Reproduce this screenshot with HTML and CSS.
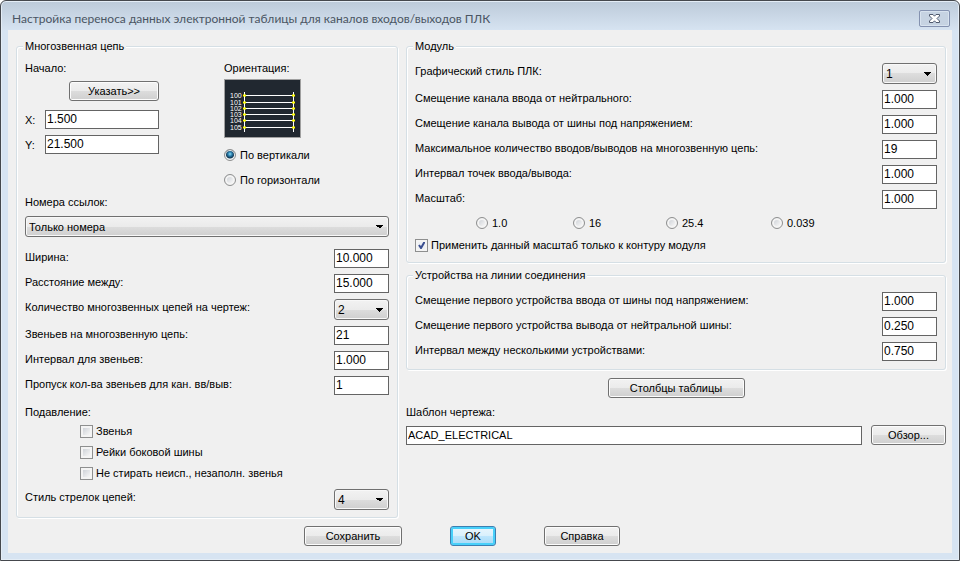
FILE: index.html
```html
<!DOCTYPE html>
<html lang="ru">
<head>
  <meta charset="UTF-8">
  <title>Настройка переноса данных</title>
  <link rel="stylesheet" href="styles.css">
</head>
<body>
  <div class="window">
    <header class="titlebar">
      <h1 class="title">Настройка переноса данных электронной таблицы для каналов входов/выходов ПЛК</h1>
      <button class="close" type="button" aria-label="Закрыть">
        <svg width="13" height="11" viewBox="0 0 13 11">
          <path d="M1.500 1.500h3.500l1.500 1.700 1.500-1.700h3.500v1.500l-2.500 2.500 2.500 2.500v1.500h-3.500l-1.500-1.700-1.500 1.700h-3.500v-1.500l2.500-2.500-2.500-2.500z" fill="#fff" stroke="#505a6e"/>
        </svg>
      </button>
    </header>

    <form class="dialog">
      <div class="columns">
        <fieldset class="group ladder">
          <legend>Многозвенная цепь</legend>

          <div class="top">
            <div class="origin">
              <span>Начало:</span>
              <button class="btn pick" type="button">Указать&gt;&gt;</button>
              <div class="coord">
                <label for="x">X:</label>
                <input class="text" id="x" type="text" value="1.500">
              </div>
              <div class="coord">
                <label for="y">Y:</label>
                <input class="text" id="y" type="text" value="21.500">
              </div>
            </div>

            <div class="orientation">
              <span>Ориентация:</span>
              <svg class="preview" width="77" height="59" viewBox="0 0 77 59">
                <rect x="0.5" y="0.5" width="76" height="58" fill="#212830" stroke="#a0a0a0"/>
                <path d="M20.500 13v40M69.500 13v40M20 16.500h50M20 23.500h50M20 29.500h50M20 35.500h50M20 41.500h50M20 48.500h50" stroke="#fff" fill="none"/>
                <path d="M19 16.500h3M19 23.500h3M19 29.500h3M19 35.500h3M19 41.500h3M19 48.500h3M68 16.500h3M68 23.500h3M68 29.500h3M68 35.500h3M68 41.500h3M68 48.500h3" stroke="#ff0" stroke-width="2" fill="none"/>
                <g class="rungs">
                  <text x="6" y="19">100</text>
                  <text x="6" y="26">101</text>
                  <text x="6" y="32">102</text>
                  <text x="6" y="38">103</text>
                  <text x="6" y="44">104</text>
                  <text x="6" y="51">105</text>
                </g>
              </svg>
              <label class="check"><input type="radio" name="orient" checked>По вертикали</label>
              <label class="check"><input type="radio" name="orient">По горизонтали</label>
            </div>
          </div>

          <label class="refs-label" for="refs">Номера ссылок:</label>
          <select class="select wide" id="refs"><option>Только номера</option></select>

          <div class="rows">
            <div class="row"><label for="width">Ширина:</label><input class="text" id="width" type="text" value="10.000"></div>
            <div class="row"><label for="spacing">Расстояние между:</label><input class="text" id="spacing" type="text" value="15.000"></div>
            <div class="row"><label for="count">Количество многозвенных цепей на чертеж:</label><select class="select" id="count"><option>2</option></select></div>
            <div class="row"><label for="rungs">Звеньев на многозвенную цепь:</label><input class="text" id="rungs" type="text" value="21"></div>
            <div class="row"><label for="step">Интервал для звеньев:</label><input class="text" id="step" type="text" value="1.000"></div>
            <div class="row"><label for="skip">Пропуск кол-ва звеньев для кан. вв/выв:</label><input class="text" id="skip" type="text" value="1"></div>
          </div>

          <div class="suppress">
            <span>Подавление:</span>
            <div class="suppress-list">
              <label class="check"><input type="checkbox">Звенья</label>
              <label class="check"><input type="checkbox">Рейки боковой шины</label>
              <label class="check"><input type="checkbox">Не стирать неисп., незаполн. звенья</label>
            </div>
          </div>

          <div class="row"><label for="arrows">Стиль стрелок цепей:</label><select class="select" id="arrows"><option>4</option></select></div>
        </fieldset>

        <div class="right">
          <fieldset class="group">
            <legend>Модуль</legend>
            <div class="rows">
              <div class="row"><label for="style">Графический стиль ПЛК:</label><select class="select" id="style"><option>1</option></select></div>
              <div class="row"><label for="in-offset">Смещение канала ввода от нейтрального:</label><input class="text" id="in-offset" type="text" value="1.000"></div>
              <div class="row"><label for="out-offset">Смещение канала вывода от шины под напряжением:</label><input class="text" id="out-offset" type="text" value="1.000"></div>
              <div class="row"><label for="max-io">Максимальное количество вводов/выводов на многозвенную цепь:</label><input class="text" id="max-io" type="text" value="19"></div>
              <div class="row"><label for="io-step">Интервал точек ввода/вывода:</label><input class="text" id="io-step" type="text" value="1.000"></div>
              <div class="row"><label for="scale">Масштаб:</label><input class="text" id="scale" type="text" value="1.000"></div>
            </div>
            <div class="scales">
              <label class="check"><input type="radio" name="scale">1.0</label>
              <label class="check"><input type="radio" name="scale">16</label>
              <label class="check"><input type="radio" name="scale">25.4</label>
              <label class="check"><input type="radio" name="scale">0.039</label>
            </div>
            <label class="check"><input type="checkbox" checked>Применить данный масштаб только к контуру модуля</label>
          </fieldset>

          <fieldset class="group devices">
            <legend>Устройства на линии соединения</legend>
            <div class="rows">
              <div class="row"><label for="first-in">Смещение первого устройства ввода от шины под напряжением:</label><input class="text" id="first-in" type="text" value="1.000"></div>
              <div class="row"><label for="first-out">Смещение первого устройства вывода от нейтральной шины:</label><input class="text" id="first-out" type="text" value="0.250"></div>
              <div class="row"><label for="dev-step">Интервал между несколькими устройствами:</label><input class="text" id="dev-step" type="text" value="0.750"></div>
            </div>
          </fieldset>

          <button class="btn table-columns" type="button">Столбцы таблицы</button>

          <label for="template">Шаблон чертежа:</label>
          <div class="template">
            <input class="text" id="template" type="text" value="ACAD_ELECTRICAL">
            <button class="btn browse" type="button">Обзор...</button>
          </div>
        </div>
      </div>

      <footer class="actions">
        <button class="btn save" type="button">Сохранить</button>
        <button class="btn ok" type="button">OK</button>
        <button class="btn help" type="button">Справка</button>
      </footer>
    </form>
  </div>
</body>
</html>
```

FILE: styles.css
```css
* {
  box-sizing: border-box;
}

body {
  margin: 0;
  background: #fff;
  color: #000;
  font-family: "Liberation Sans", Arial, sans-serif;
  font-size: 11px;
  line-height: 14px;
}

button,
input,
select {
  margin: 0;
  font: inherit;
  color: inherit;
}

/* Window frame */
.window {
  min-height: 100vh;
  display: flex;
  flex-direction: column;
  padding: 0 7px 7px;
  border: 1px solid #45484d;
  border-radius: 6px 6px 0 0;
  background: linear-gradient(#bccad9, #d7e4f2 30px);
  box-shadow: inset 0 0 0 1px #e4edf6;
}

.titlebar {
  display: flex;
  align-items: center;
  justify-content: space-between;
  height: 29px;
  padding: 6px 2px 0 4px;
}

.title {
  margin: 0;
  font-family: Lato, "Noto Sans", sans-serif;
  font-size: 12px;
  font-weight: normal;
  line-height: 18px;
  color: #4a5563;
  white-space: nowrap;
}

.close {
  display: flex;
  align-items: center;
  justify-content: center;
  width: 31px;
  height: 17px;
  padding: 0;
  border: 1px solid #8492b0;
  border-radius: 2px;
  background: #c6d3e2;
  box-shadow: inset 0 0 0 1px #d8e3ef;
}

.dialog {
  flex: 1;
  display: flex;
  flex-direction: column;
  justify-content: space-between;
  padding: 9px 6px 7px 8px;
  background: #f0f0f0;
}

.columns {
  display: grid;
  grid-template-columns: 382fr 540fr;
  gap: 8px;
}

/* Group boxes */
.group {
  min-width: 0;
  margin: 0;
  padding: 10px 8px;
  border: 1px solid #d5dfe5;
  border-radius: 3px;
  box-shadow: inset 1px 1px 0 #fff, 1px 1px 0 #fff;
}

.group legend {
  padding: 0 2px;
  margin-left: -2px;
  background: #f0f0f0;
}

.ladder {
  padding: 8px 8px 7px;
}

.devices {
  margin-top: 5px;
  padding-bottom: 8px;
}

.right {
  display: flex;
  flex-direction: column;
}

/* Rows with a label and a field */
.rows {
  display: flex;
  flex-direction: column;
  gap: 6px;
}

.row {
  display: flex;
  justify-content: space-between;
}

.row label {
  padding-top: 1px;
}

.row .text,
.row .select {
  width: 55px;
}

.text {
  height: 19px;
  padding: 0 2px 2px 1px;
  border: 1px solid #646464;
  border-radius: 0;
  background: #fff;
  font-size: 12px;
}

.select {
  height: 21px;
  padding: 0 4px 0 3px;
  border: 1px solid #707070;
  border-radius: 3px;
  appearance: none;
  background:
    linear-gradient(to bottom right, #000 50%, transparent 50%) right 4px center / 4px 4px no-repeat,
    linear-gradient(to bottom left, #000 50%, transparent 50%) right 8px center / 4px 4px no-repeat,
    linear-gradient(#f2f2f2, #ebebeb 50%, #dddddd 50%, #cfcfcf);
  box-shadow: inset 0 0 0 1px #f8f8f8;
  font-size: 12px;
}

.select.wide {
  display: block;
  width: 100%;
  font-size: 11px;
}

.btn {
  height: 20px;
  padding: 0 4px;
  border: 1px solid #707070;
  border-radius: 3px;
  background: linear-gradient(#f2f2f2, #ebebeb 50%, #dddddd 50%, #cfcfcf);
  box-shadow: inset 0 0 0 1px #fcfcfc;
}

/* Radio buttons and tick boxes */
.check {
  display: flex;
  align-items: center;
  gap: 4px;
}

.check input {
  appearance: none;
  flex: none;
  width: 12px;
  height: 12px;
  border: 1px solid #8e8f8f;
  background: linear-gradient(135deg, #c4c9d0, #f6f6f6 80%);
  box-shadow: inset 0 0 0 2px #f4f4f4;
}

.check input[type="checkbox"] {
  width: 13px;
  height: 13px;
  margin-right: -1px;
}

.check input[type="radio"] {
  border-radius: 50%;
}

.check input[type="radio"]:checked {
  background: radial-gradient(circle at 5px 4px, #8fe0f8 0, #2b7fae 2px, #12354f 4px, #e8eef2 5px);
  box-shadow: inset 0 0 0 1px #f4f4f4;
}

.check input[type="checkbox"]:checked {
  background: url("data:image/svg+xml,%3Csvg xmlns='http://www.w3.org/2000/svg' viewBox='0 0 10 10'%3E%3Cpath d='M2 5l2 3 4-7' fill='none' stroke='%233b4f91' stroke-width='2'/%3E%3C/svg%3E") center / 10px 10px no-repeat, #edf0f4;
}

/* Origin and orientation */
.top {
  display: grid;
  grid-template-columns: 199px 1fr;
}

.origin {
  display: flex;
  flex-direction: column;
}

.pick {
  width: 90px;
  margin: 6px 0 9px 44px;
}

.coord {
  display: flex;
  align-items: center;
  margin-bottom: 6px;
}

.coord label {
  width: 20px;
}

.coord .text {
  width: 114px;
}

.orientation {
  display: flex;
  flex-direction: column;
  align-items: flex-start;
}

.orientation .check {
  margin-bottom: 11px;
}

.preview {
  margin: 4px 0 10px;
}

.rungs {
  font-size: 7px;
  fill: #fff;
}

.refs-label {
  display: block;
  margin: -3px 0 7px;
}

.ladder .rows {
  margin-top: 12px;
}

.suppress {
  margin: 10px 0 9px;
}

.suppress-list {
  display: flex;
  flex-direction: column;
  gap: 7px;
  padding: 5px 0 0 55px;
}

/* Module scale */
.scales {
  display: grid;
  grid-template-columns: 97px 93px 105px 1fr;
  margin: 7px 0 8px;
  padding-left: 61px;
}

.table-columns {
  align-self: center;
  width: 137px;
  margin: 8px 0 7px;
}

.template {
  display: flex;
  align-items: flex-end;
  gap: 9px;
  margin-top: 6px;
}

.template .text {
  flex: 1;
  font-size: 11px;
}

.browse {
  width: 75px;
}

.actions {
  display: flex;
  justify-content: center;
  gap: 48px;
  padding-right: 38px;
}

.save {
  width: 98px;
}

.ok {
  width: 46px;
  border-color: #3c7fb1;
  background: linear-gradient(#eaf6fd, #d9f0fc 50%, #bee6fd 50%, #a7d9f5);
  box-shadow: inset 0 0 0 2px #48d0fa;
}

.help {
  width: 76px;
}
```
